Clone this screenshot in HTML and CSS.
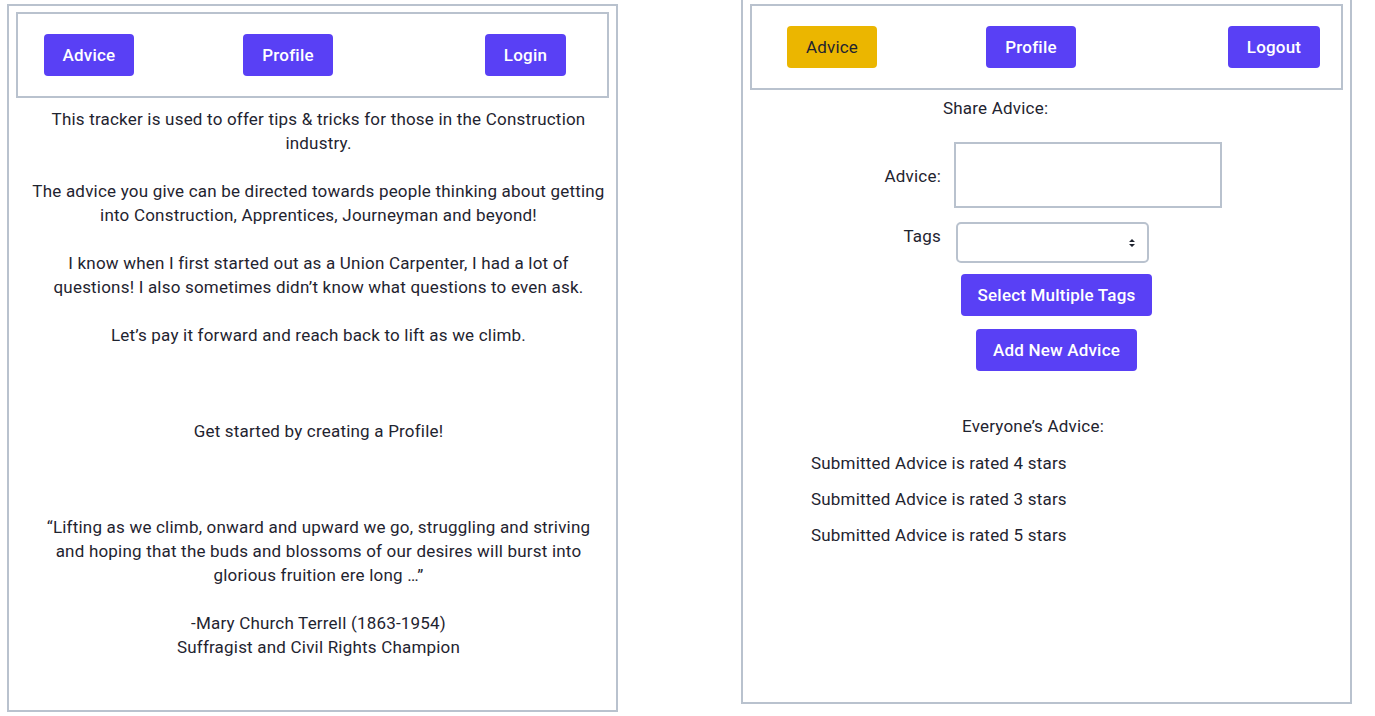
FILE: index.html
```html
<!DOCTYPE html>
<html lang="en">
<head>
<meta charset="utf-8">
<title>Construction Advice Tracker</title>
<link rel="stylesheet" href="styles.css">
</head>
<body>
<div class="page">
  <section class="panel panel-home">
    <nav class="nav nav-home">
      <button class="btn btn-nav btn-advice">Advice</button>
      <button class="btn btn-nav btn-profile">Profile</button>
      <button class="btn btn-nav btn-login">Login</button>
    </nav>
    <div class="intro">
      <p class="para">This tracker is used to offer tips &amp; tricks for those in the Construction<br>industry.</p>
      <p class="para">The advice you give can be directed towards people thinking about getting<br>into Construction, Apprentices, Journeyman and beyond!</p>
      <p class="para">I know when I first started out as a Union Carpenter, I had a lot of<br>questions! I also sometimes didn’t know what questions to even ask.</p>
      <p class="para para-far">Let’s pay it forward and reach back to lift as we climb.</p>
      <p class="para para-far">Get started by creating a Profile!</p>
      <p class="para">“Lifting as we climb, onward and upward we go, struggling and striving<br>and hoping that the buds and blossoms of our desires will burst into<br>glorious fruition ere long …”</p>
      <p class="para">-Mary Church Terrell (1863-1954)<br>Suffragist and Civil Rights Champion</p>
    </div>
  </section>

  <section class="panel panel-advice">
    <nav class="nav nav-advice">
      <button class="btn btn-nav btn-active btn-advice2">Advice</button>
      <button class="btn btn-nav btn-profile">Profile</button>
      <button class="btn btn-nav btn-logout">Logout</button>
    </nav>
    <h2 class="share-title">Share Advice:</h2>
    <form class="advice-form">
      <label class="form-label label-advice" for="advice">Advice:</label>
      <textarea id="advice" class="advice-input"></textarea>
      <label class="form-label label-tags" for="tags">Tags</label>
      <div class="select-wrap">
        <select id="tags" class="tags-select"><option></option></select>
        <svg class="select-arrows" width="8" height="12" viewBox="0 0 8 12" aria-hidden="true">
          <path d="M1 5 L4 2 L7 5 Z M1 7 L4 10 L7 7 Z" fill="#1f2430"/>
        </svg>
      </div>
    </form>
    <div class="form-actions">
      <button class="btn btn-action">Select Multiple Tags</button>
      <button class="btn btn-action">Add New Advice</button>
    </div>
    <h2 class="everyone-title">Everyone’s Advice:</h2>
    <ul class="advice-list">
      <li>Submitted Advice is rated 4 stars</li>
      <li>Submitted Advice is rated 3 stars</li>
      <li>Submitted Advice is rated 5 stars</li>
    </ul>
  </section>
</div>
</body>
</html>
```

FILE: styles.css
```css
* { box-sizing: border-box; }

html, body {
  margin: 0;
  padding: 0;
  background: #ffffff;
  overflow: hidden;
}

body {
  font-family: Roboto, "Liberation Sans", sans-serif;
  font-size: 17px;
  letter-spacing: 0.2px;
  line-height: 24px;
  color: #1f2430;
}

.page {
  display: flex;
  align-items: flex-start;
  padding: 4px 0 0 7px;
}

.panel {
  width: 611px;
  height: 708px;
  border: 2px solid #b9c2ce;
  padding: 6px 7px;
  flex: none;
}

.panel-advice {
  margin-left: 123px;
  margin-top: -8px;
}

.nav {
  display: flex;
  align-items: center;
  height: 86px;
  border: 2px solid #b9c2ce;
}

.nav-home { padding-left: 26px; }
.nav-advice { padding-left: 35px; }

.btn {
  font-family: Roboto, "Liberation Sans", sans-serif;
  font-weight: 500;
  font-size: 17px;
  letter-spacing: 0.2px;
  color: #ffffff;
  background: #5940f5;
  border: none;
  border-radius: 4px;
  height: 42px;
  padding: 0 20px;
  cursor: pointer;
}

.btn-nav { width: 90px; padding: 0; }
.btn-login { width: 81px; }
.btn-logout { width: 92px; }
.nav .btn-profile { margin-left: 109px; }
.btn-login, .btn-logout { margin-left: 152px; }

.btn-active {
  background: #ebb600;
  color: #1f2430;
  font-weight: 400;
}

.intro {
  text-align: center;
  padding: 9px 3px 0 15px;
}

.para {
  margin: 0 0 24px;
  white-space: nowrap;
}

.para-far { margin-bottom: 72px; }

.share-title,
.everyone-title {
  font-size: 17px;
  font-weight: 400;
  line-height: 24px;
  margin: 0;
}

.share-title {
  margin-top: 6px;
  padding-left: 193px;
}

.advice-form {
  display: grid;
  grid-template-columns: 191px auto;
  column-gap: 13px;
  row-gap: 14px;
  margin-top: 22px;
  justify-content: start;
}

.form-label {
  text-align: right;
}

.label-advice { align-self: center; padding-top: 1px; }
.label-tags { align-self: start; padding-top: 2px; }

.advice-input {
  width: 268px;
  height: 66px;
  border: 2px solid #b9c2ce;
  border-radius: 0;
  resize: none;
  display: block;
  margin: 0;
  font: inherit;
}

.select-wrap {
  position: relative;
  width: 193px;
  height: 41px;
  margin-left: 2px;
}

.tags-select {
  appearance: none;
  -webkit-appearance: none;
  width: 100%;
  height: 100%;
  border: 2px solid #b9c2ce;
  border-radius: 5px;
  background: #ffffff;
  font: inherit;
  margin: 0;
}

.select-arrows {
  position: absolute;
  right: 13px;
  top: 15px;
}

.form-actions {
  display: flex;
  flex-direction: column;
  align-items: center;
  row-gap: 13px;
  margin-top: 11px;
  padding-left: 20px;
}

.btn-action { padding: 0 17px; }

.everyone-title {
  margin-top: 43px;
  padding-left: 212px;
}

.advice-list {
  list-style: none;
  margin: 13px 0 0;
  padding: 0 0 0 61px;
  display: flex;
  flex-direction: column;
  row-gap: 12px;
}
```
